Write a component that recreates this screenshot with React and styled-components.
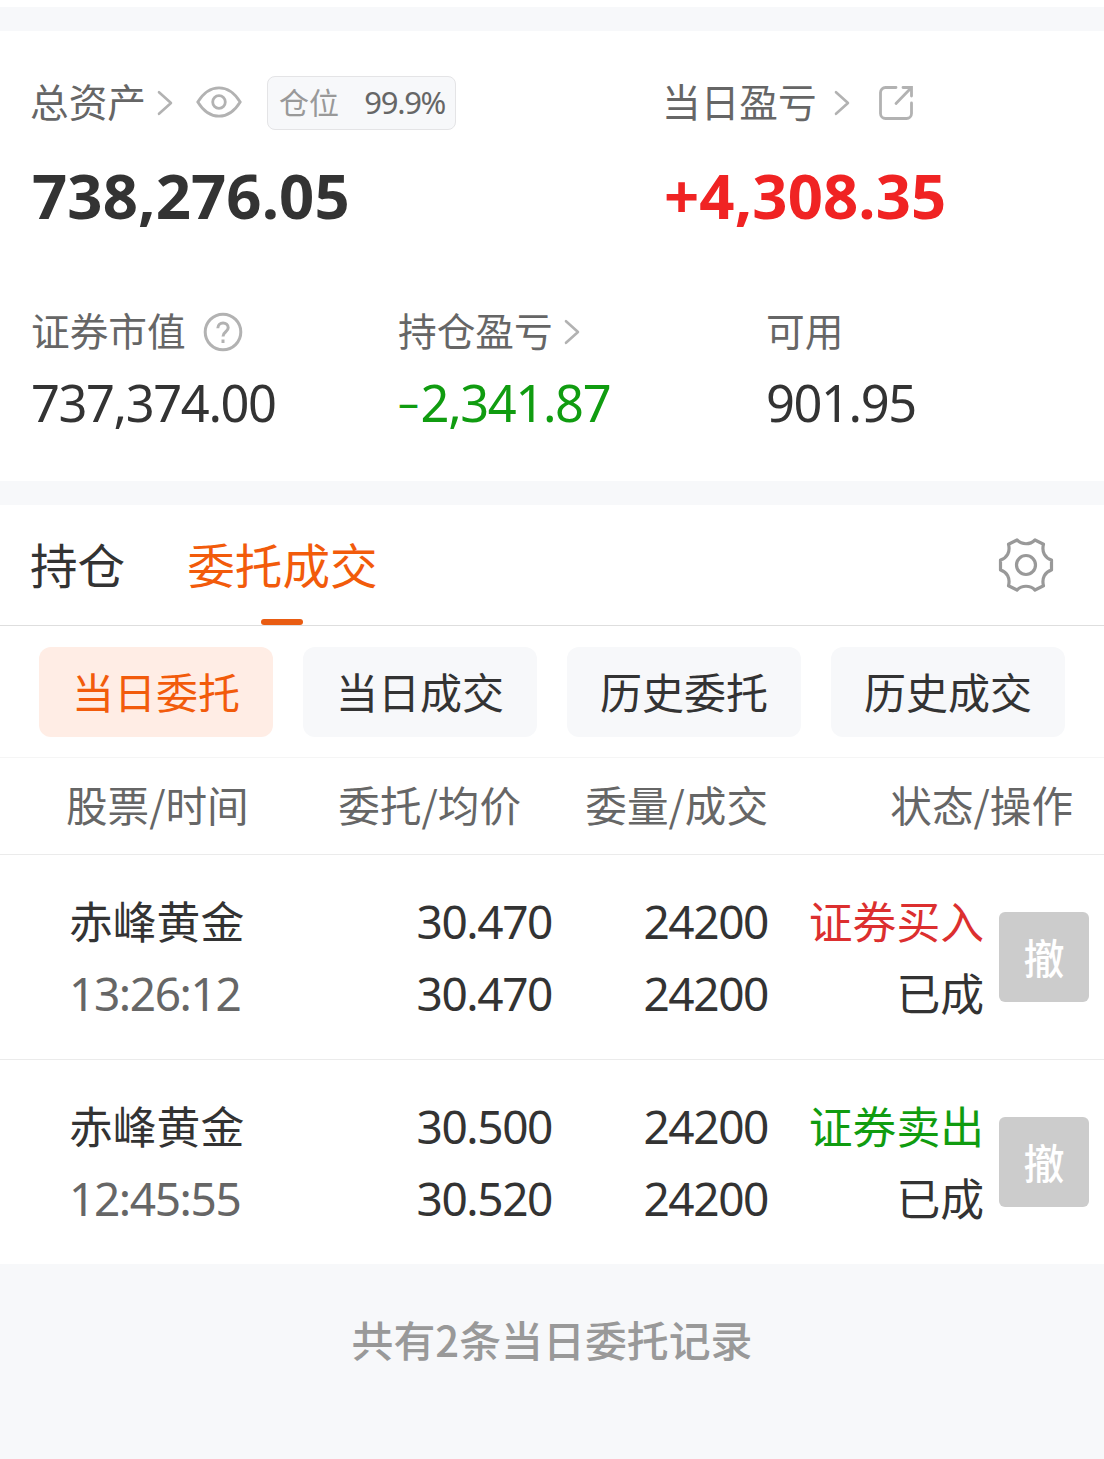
import React from 'react';
import styled, { createGlobalStyle } from 'styled-components';

const filters = ['当日委托', '当日成交', '历史委托', '历史成交'];

const orders = [
    { name: '赤峰黄金', time: '13:26:12', price: '30.470', avg: '30.470', amount: '24200', filled: '24200', side: 'buy', label: '证券买入', status: '已成' },
    { name: '赤峰黄金', time: '12:45:55', price: '30.500', avg: '30.520', amount: '24200', filled: '24200', side: 'sell', label: '证券卖出', status: '已成' },
];

function Chevron({ wide }) {
    return (
        <ChevronIcon viewBox="0 0 16 26" $wide={wide}>
            <path d="M2 2.2 L14 13 L2 23.8" />
        </ChevronIcon>
    );
}

function App() {
    return (
        <>
            <GlobalStyle />
            <Page>
                <Summary>
                    <TopRow>
                        <div>
                            <LabelRow>
                                <Label>总资产</Label>
                                <Chevron />
                                <EyeIcon viewBox="0 0 46 32">
                                    <path d="M1.8 16 C7 7.5 14.5 1.8 23 1.8 S39 7.5 44.2 16 C39 24.5 31.5 30.2 23 30.2 S7 24.5 1.8 16 Z" />
                                    <circle cx="23" cy="16" r="6.3" />
                                </EyeIcon>
                                <PositionTag>
                                    <TagName>仓位</TagName>
                                    <TagValue>99.9%</TagValue>
                                </PositionTag>
                            </LabelRow>
                            <Total>738,276.05</Total>
                        </div>
                        <div>
                            <LabelRow>
                                <Label>当日盈亏</Label>
                                <Chevron wide />
                                <ShareIcon viewBox="0 0 34 34">
                                    <path d="M17 1.5 H6.5 A5 5 0 0 0 1.5 6.5 V27.5 A5 5 0 0 0 6.5 32.5 H27.5 A5 5 0 0 0 32.5 27.5 V17" />
                                    <path d="M24 1.5 H32.5 V10 M32 2 L17 17.5" />
                                </ShareIcon>
                            </LabelRow>
                            <Total $up>+4,308.35</Total>
                        </div>
                    </TopRow>
                    <StatRow>
                        <div>
                            <LabelRow>
                                <Label>证券市值</Label>
                                <HelpIcon viewBox="0 0 40 40">
                                    <circle cx="20" cy="20" r="17.8" />
                                    <path d="M14.8 16.2 C14.8 9.2 25.2 9.2 25.2 15.8 C25.2 20 20 19.5 20 24.5" />
                                    <path d="M20 27.5 V31" />
                                </HelpIcon>
                            </LabelRow>
                            <Value>737,374.00</Value>
                        </div>
                        <div>
                            <LabelRow>
                                <Label>持仓盈亏</Label>
                                <Chevron />
                            </LabelRow>
                            <Value $down><Minus>–</Minus>2,341.87</Value>
                        </div>
                        <div>
                            <LabelRow>
                                <Label>可用</Label>
                            </LabelRow>
                            <Value>901.95</Value>
                        </div>
                    </StatRow>
                </Summary>
                <Tabs>
                    <Tab>持仓</Tab>
                    <Tab $active>委托成交</Tab>
                    <GearIcon viewBox="-28 -28 56 56">
                        <path d="M-17.5 -20.8 L-9 -25 C-4 -20 4 -20 9 -25 L17.5 -20.8 C15.5 -13 19 -7 25.5 -5 V5 C19 7 15.5 13 17.5 20.8 L9 25 C4 20 -4 20 -9 25 L-17.5 20.8 C-15.5 13 -19 7 -25.5 5 V-5 C-19 -7 -15.5 -13 -17.5 -20.8 Z" />
                        <circle r="9.5" />
                    </GearIcon>
                </Tabs>
                <Filters>
                    {filters.map((text, i) => (
                        <Filter key={text} $active={i === 0}>{text}</Filter>
                    ))}
                </Filters>
                <TableHead>
                    <span>股票/时间</span>
                    <HeadRight>委托/均价</HeadRight>
                    <HeadRight>委量/成交</HeadRight>
                    <HeadRight>状态/操作</HeadRight>
                </TableHead>
                {orders.map((order) => (
                    <Order key={order.time}>
                        <Cell>
                            <Name>{order.name}</Name>
                            <Time>{order.time}</Time>
                        </Cell>
                        <Cell $right>
                            <Num>{order.price}</Num>
                            <Num>{order.avg}</Num>
                        </Cell>
                        <Cell $right>
                            <Num>{order.amount}</Num>
                            <Num>{order.filled}</Num>
                        </Cell>
                        <Cell $right>
                            <Side $side={order.side}>{order.label}</Side>
                            <Name>{order.status}</Name>
                        </Cell>
                        <Cancel>撤</Cancel>
                    </Order>
                ))}
                <Footer>共有2条当日委托记录</Footer>
            </Page>
        </>
    );
}

const GlobalStyle = createGlobalStyle`
    * {
        box-sizing: border-box;
    }
    body {
        margin: 0;
        background: #f7f8fa;
        color: #333;
        font-family: "Noto Sans CJK SC", sans-serif;
    }
`;

const Page = styled.div`
    width: 1104px;
    border-top: 7px solid #fff;
    white-space: nowrap;
`;

const Summary = styled.section`
    height: 498px;
    padding-top: 43px;
    border-top: 24px solid #f7f8fa;
    border-bottom: 24px solid #f7f8fa;
    background: #fff;
`;

const TopRow = styled.div`
    display: grid;
    grid-template-columns: 632px 1fr;
    padding-left: 31px;
`;

const StatRow = styled.div`
    display: grid;
    grid-template-columns: 367px 368px 1fr;
    padding: 69px 0 0 32px;
`;

const LabelRow = styled.div`
    display: flex;
    align-items: center;
    height: 56px;
`;

const Label = styled.span`
    margin: 0 0 5px -1px;
    font-size: 38.7px;
    line-height: 56px;
    color: #666;
`;

const ChevronIcon = styled.svg`
    width: 16px;
    height: 26px;
    margin: 2px 0 0 ${({ $wide }) => ($wide ? '17px' : '11px')};
    fill: none;
    stroke: #b2b2b2;
    stroke-width: 2.6;
    stroke-linecap: round;
    stroke-linejoin: round;
`;

const EyeIcon = styled.svg`
    width: 46px;
    height: 32px;
    margin-left: 23px;
    fill: none;
    stroke: #b2b2b2;
    stroke-width: 2.8;
`;

const ShareIcon = styled.svg`
    width: 34px;
    height: 34px;
    margin: 2px 0 0 29px;
    fill: none;
    stroke: #b2b2b2;
    stroke-width: 2.8;
    stroke-linecap: round;
`;

const HelpIcon = styled.svg`
    width: 40px;
    height: 40px;
    margin: 2px 0 0 17px;
    fill: none;
    stroke: #b2b2b2;
    stroke-width: 3;
`;

const PositionTag = styled.div`
    display: flex;
    align-items: center;
    justify-content: space-between;
    width: 189px;
    height: 54px;
    margin: 2px 0 0 25px;
    padding: 0 10px 5px 11px;
    border: 1px solid #e4e4e6;
    border-radius: 8px;
    background: #f7f8fa;
    font-size: 30px;
`;

const TagName = styled.span`
    color: #999;
`;

const TagValue = styled.span`
    padding-top: 2px;
    font-family: "Noto Sans", sans-serif;
    font-size: 31px;
    line-height: 48px;
    letter-spacing: -1.3px;
    color: #666;
`;

const Total = styled.div`
    margin: 26px 0 0 1px;
    font-family: "Noto Sans", sans-serif;
    font-size: 61.6px;
    font-weight: 700;
    line-height: 78px;
    letter-spacing: 0.1px;
    color: ${({ $up }) => ($up ? '#f02323' : '#333')};
`;

const Value = styled.div`
    margin: 11px 0 0 -1px;
    font-family: "Noto Sans", sans-serif;
    font-size: 50.6px;
    line-height: 66px;
    letter-spacing: -1.4px;
    color: ${({ $down }) => ($down ? '#109c10' : '#333')};
`;

const Minus = styled.span`
    position: relative;
    top: -4px;
    margin-right: 3px;
    font-size: 42px;
    line-height: 1;
`;

const Tabs = styled.nav`
    display: flex;
    gap: 62px;
    height: 121px;
    padding: 0 50px 0 30px;
    border-bottom: 1px solid #dedede;
    background: #fff;
`;

const Tab = styled.div`
    position: relative;
    font-size: 47.6px;
    line-height: 117px;
    color: ${({ $active }) => ($active ? '#f25b0b' : '#333')};
    &::after {
        content: "";
        display: ${({ $active }) => ($active ? 'block' : 'none')};
        position: absolute;
        bottom: 0;
        left: 50%;
        width: 42px;
        height: 6px;
        margin-left: -21px;
        border-radius: 3px;
        background: #e95c12;
    }
`;

const GearIcon = styled.svg`
    width: 56px;
    height: 56px;
    margin: 32px 0 0 auto;
    fill: none;
    stroke: #999;
    stroke-width: 3.2;
    stroke-linejoin: round;
`;

const Filters = styled.div`
    display: grid;
    grid-template-columns: repeat(4, 234px);
    gap: 30px;
    height: 132px;
    padding: 21px 39px 20px;
    border-bottom: 1px solid #f5f5f5;
    background: #fff;
`;

const Filter = styled.div`
    border-radius: 12px;
    font-size: 42px;
    line-height: 88px;
    text-align: center;
    color: ${({ $active }) => ($active ? '#f25b0b' : '#333')};
    background: ${({ $active }) => ($active ? '#ffede5' : '#f7f8fa')};
`;

const TableHead = styled.div`
    display: grid;
    grid-template-columns: 183px 272px 247px 1fr;
    height: 97px;
    padding: 0 31px 0 66px;
    border-bottom: 1px solid #ebebeb;
    background: #fff;
    font-size: 41.6px;
    line-height: 93px;
    color: #666;
`;

const HeadRight = styled.span`
    text-align: right;
`;

const Order = styled.div`
    display: grid;
    grid-template-columns: 200px 283px 216px 216px 105px;
    height: 205px;
    padding: 29px 15px 0 69px;
    border-bottom: 1px solid #ebebeb;
    background: #fff;
    &:nth-last-child(2) {
        border-bottom-color: #f7f8fa;
    }
`;

const Cell = styled.div`
    font-size: 43.8px;
    line-height: 72px;
    text-align: ${({ $right }) => ($right ? 'right' : 'left')};
`;

const Name = styled.div``;

const Num = styled.div`
    height: 72px;
    padding-top: 1px;
    font-family: "Noto Sans", sans-serif;
    font-size: 46px;
    letter-spacing: -1.4px;
`;

const Time = styled(Num)`
    color: #666;
`;

const Side = styled.div`
    color: ${({ $side }) => ($side === 'buy' ? '#dc2f2f' : '#109c10')};
`;

const Cancel = styled.button`
    width: 90px;
    height: 90px;
    margin: 28px 0 0 15px;
    padding: 0 0 2px;
    border: 0;
    border-radius: 6px;
    background: #ccc;
    color: #fff;
    font-family: inherit;
    font-size: 41px;
    font-weight: 500;
    line-height: 88px;
`;

const Footer = styled.footer`
    height: 195px;
    padding-top: 43px;
    font-size: 41.9px;
    font-weight: 500;
    line-height: 62px;
    text-align: center;
    color: #999;
`;

export default App;
